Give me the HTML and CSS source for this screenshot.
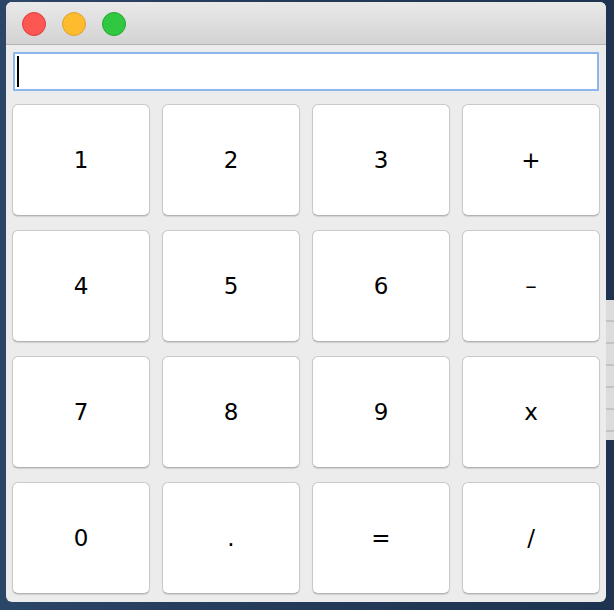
FILE: index.html
```html
<!DOCTYPE html>
<html>
<head>
<meta charset="utf-8">
<title>Calculator</title>
<link rel="stylesheet" href="styles.css">
</head>
<body>
<div class="desktop">
  <div class="behind"></div>
  <div class="window">
    <div class="titlebar">
      <span class="light red"></span>
      <span class="light yellow"></span>
      <span class="light green"></span>
    </div>
    <div class="content">
      <div class="field"><span class="caret"></span></div>
      <div class="keys">
        <button class="key">1</button>
        <button class="key">2</button>
        <button class="key">3</button>
        <button class="key">+</button>
        <button class="key">4</button>
        <button class="key">5</button>
        <button class="key">6</button>
        <button class="key">–</button>
        <button class="key">7</button>
        <button class="key">8</button>
        <button class="key">9</button>
        <button class="key">x</button>
        <button class="key">0</button>
        <button class="key">.</button>
        <button class="key">=</button>
        <button class="key">/</button>
      </div>
    </div>
  </div>
</div>
</body>
</html>
```

FILE: styles.css
```css
html, body {
  margin: 0;
  padding: 0;
}
body {
  width: 614px;
  height: 610px;
  overflow: hidden;
  background: #263e5e;
  font-family: "DejaVu Sans", "Liberation Sans", sans-serif;
}
.desktop {
  position: relative;
  width: 614px;
  height: 610px;
  background: linear-gradient(90deg, #2c4668 0%, #233a58 50%, #1e3350 100%);
  padding-top: 2px;
  box-sizing: border-box;
}
.behind {
  position: absolute;
  left: 606px;
  top: 300px;
  width: 8px;
  height: 140px;
  background: repeating-linear-gradient(180deg, #dcdcdc 0px, #dcdcdc 20px, #c4c4c4 20px, #c4c4c4 22px);
}
.window {
  position: relative;
  margin-left: 6px;
  width: 600px;
  height: 600px;
  background: #ececec;
  border-radius: 6px;
  overflow: hidden;
}
.titlebar {
  height: 42px;
  border-bottom: 1px solid #b4b4b4;
  background: linear-gradient(180deg, #e9e9e9 0%, #d3d3d3 100%);
  display: flex;
  align-items: center;
  padding-left: 16px;
  gap: 16px;
  box-sizing: content-box;
}
.light {
  width: 24px;
  height: 24px;
  border-radius: 50%;
  box-sizing: border-box;
  margin-top: 2px;
}
.red { background: #fc5753; border: 1px solid #df3e3a; }
.yellow { background: #fdbc2e; border: 1px solid #dea033; }
.green { background: #2fc840; border: 1px solid #25a732; }
.content {
  padding: 7px 6px 8px 6px;
}
.field {
  margin: 0 1px;
  height: 39px;
  background: #fff;
  border: 2px solid #8db6ec;
  box-sizing: border-box;
  border-radius: 1px;
  display: flex;
  align-items: center;
  padding-left: 2px;
}
.caret {
  width: 2px;
  height: 31px;
  background: #000;
}
.keys {
  margin-top: 13px;
  display: grid;
  grid-template-columns: repeat(4, 138px);
  grid-template-rows: repeat(4, 112px);
  column-gap: 12px;
  row-gap: 14px;
}
.key {
  margin: 0;
  padding: 0;
  background: #fff;
  border: 1px solid #c9c9c9;
  border-bottom-color: #b3b3b3;
  border-radius: 6px;
  box-shadow: 0 1px 1px rgba(0, 0, 0, 0.12);
  font-family: "DejaVu Sans", "Liberation Sans", sans-serif;
  font-size: 23px;
  color: #000;
  display: flex;
  align-items: center;
  justify-content: center;
}
```
